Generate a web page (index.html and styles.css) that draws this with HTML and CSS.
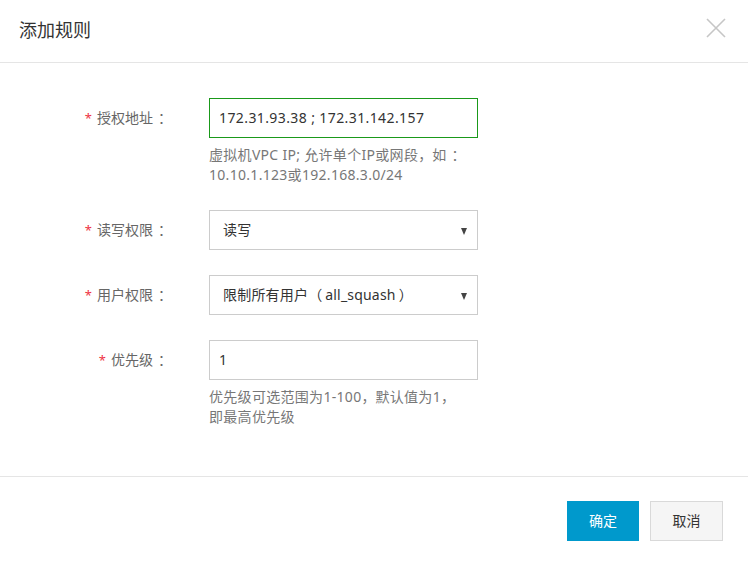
FILE: index.html
```
<!DOCTYPE html>
<html lang="zh-CN">
<head>
<meta charset="utf-8">
<link rel="stylesheet" href="styles.css">
</head>
<body>
<div class="dialog">
  <div class="header">
    <div class="title">添加规则</div>
    <svg class="close" width="20" height="20" viewBox="0 0 20 20"><path d="M1 1L19 19M19 1L1 19" stroke="#c6c6c6" stroke-width="1.6" fill="none"/></svg>
  </div>
  <div class="body">
    <div class="row">
      <div class="label"><span class="req">*</span>授权地址<span class="p pc">：</span></div>
      <div class="field">
        <div class="box active">172.31.93.38 ; 172.31.142.157</div>
        <div class="help">虚拟机VPC IP; 允许单个IP或网段<span class="p">，</span>如<span class="p pc">：</span><br>10.10.1.123或192.168.3.0/24</div>
      </div>
    </div>
    <div class="row">
      <div class="label"><span class="req">*</span>读写权限<span class="p pc">：</span></div>
      <div class="field">
        <div class="box select">读写<span class="arrow"></span></div>
      </div>
    </div>
    <div class="row">
      <div class="label"><span class="req">*</span>用户权限<span class="p pc">：</span></div>
      <div class="field">
        <div class="box select">限制所有用户<span class="p pl">（</span>all_squash<span class="p pr">）</span><span class="arrow"></span></div>
      </div>
    </div>
    <div class="row">
      <div class="label"><span class="req">*</span>优先级<span class="p pc">：</span></div>
      <div class="field">
        <div class="box">1</div>
        <div class="help">优先级可选范围为1-100<span class="p">，</span>默认值为1<span class="p">，</span><br>即最高优先级</div>
      </div>
    </div>
  </div>
  <div class="footer">
    <div class="btn primary">确定</div>
    <div class="btn">取消</div>
  </div>
</div>
</body>
</html>
```
FILE: styles.css
```
* { box-sizing: border-box; }
html, body { margin: 0; padding: 0; background: #fff; }
body {
  font-family: "Noto Sans", "Noto Sans CJK SC", sans-serif;
  font-size: 14px;
  color: #333;
}
.dialog { width: 748px; height: 565px; background: #fff; }
.header {
  height: 63px;
  border-bottom: 1px solid #e5e5e5;
  display: flex;
  align-items: center;
  justify-content: space-between;
  padding: 0 22px 2px 19px;
}
.title { font-size: 18px; color: #333; line-height: 24px; }
.close { display: block; margin-top: -4px; }
.body {
  padding: 35px 0 49px 0;
  display: flex;
  flex-direction: column;
  gap: 25px;
}
.row { display: flex; align-items: flex-start; }
.label {
  width: 167px;
  height: 40px;
  margin-right: 42px;
  text-align: right;
  line-height: 40px;
  color: #666;
  white-space: nowrap;
}
.p {
  display: inline-block;
  width: 14px;
  line-height: 1;
  text-align: left;
  letter-spacing: 0;
  font-family: "Noto Sans CJK SC", sans-serif;
}
.p.pc { text-indent: 5px; }
.p.pl { margin-right: 3px; }
.p.pr { margin-left: 3px; }
.req { color: #ee3344; margin-right: 5px; font-size: 13px; }
.field { width: 269px; }
.box {
  height: 40px;
  border: 1px solid #ccc;
  padding: 0 9px;
  line-height: 38px;
  color: #333;
  position: relative;
  white-space: nowrap;
  letter-spacing: 0.4px;
}
.box.active { border-color: #1a991a; }
.box.select { padding-left: 13px; letter-spacing: 0.2px; }
.arrow {
  position: absolute;
  right: 10px;
  top: 17px;
  width: 0;
  height: 0;
  border-left: 3.5px solid transparent;
  border-right: 3.5px solid transparent;
  border-top: 7px solid #444;
}
.help {
  margin-top: 7px;
  line-height: 20px;
  color: #777;
  white-space: nowrap;
  letter-spacing: 0.3px;
}
.footer {
  border-top: 1px solid #e5e5e5;
  display: flex;
  justify-content: flex-end;
  gap: 11px;
  padding: 24px 25px 0 0;
}
.btn {
  width: 73px;
  height: 40px;
  line-height: 38px;
  text-align: center;
  border: 1px solid #d9d9d9;
  background: #f5f5f5;
  color: #333;
  font-size: 14px;
}
.btn.primary { background: #0099cc; border-color: #0099cc; color: #fff; width: 72px; }
```
